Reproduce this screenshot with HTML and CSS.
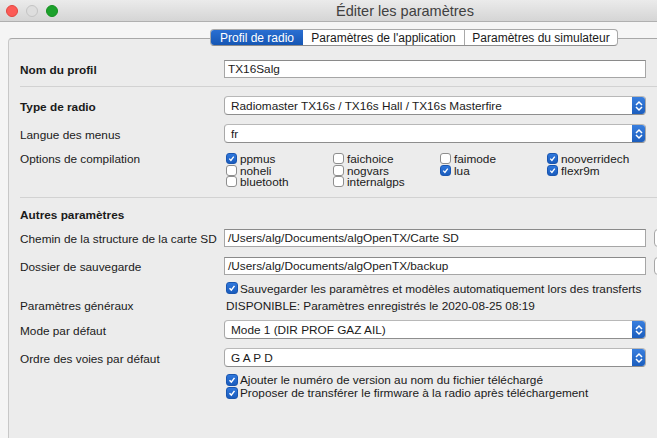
FILE: index.html
```html
<!DOCTYPE html>
<html lang="fr">
<head>
<meta charset="utf-8">
<title>Éditer les paramètres</title>
<link rel="stylesheet" href="styles.css">
</head>
<body>
<div class="window">
  <div class="titlebar">
    <div class="lights">
      <span class="light red"></span>
      <span class="light grey"></span>
      <span class="light green"></span>
    </div>
    <div class="title">Éditer les paramètres</div>
  </div>
  <div class="body">
    <div class="tabs">
      <div class="tab active">Profil de radio</div>
      <div class="tab">Paramètres de l'application</div>
      <div class="tab last">Paramètres du simulateur</div>
    </div>
    <div class="panel">
      <div class="form">
        <div class="row r-name">
          <div class="label bold">Nom du profil</div>
          <div class="input">TX16Salg</div>
        </div>
        <div class="sep s1"></div>
        <div class="row r-type">
          <div class="label bold">Type de radio</div>
          <div class="select"><span class="sel-text">Radiomaster TX16s / TX16s Hall / TX16s Masterfire</span><span class="arrows"><svg width="8" height="12" viewBox="0 0 8 12"><path d="M1 5 L4 2 L7 5 M1 7 L4 10 L7 7" fill="none" stroke="#fff" stroke-width="1.5"/></svg></span></div>
        </div>
        <div class="row r-lang">
          <div class="label">Langue des menus</div>
          <div class="select"><span class="sel-text">fr</span><span class="arrows"><svg width="8" height="12" viewBox="0 0 8 12"><path d="M1 5 L4 2 L7 5 M1 7 L4 10 L7 7" fill="none" stroke="#fff" stroke-width="1.5"/></svg></span></div>
        </div>
        <div class="row r-opts">
          <div class="label">Options de compilation</div>
          <div class="optgrid">
            <div class="opt"><span class="cb on"><svg viewBox="0 0 12 12"><path d="M3 6.2 L5.2 8.5 L9 3.5" fill="none" stroke="#fff" stroke-width="1.8"/></svg></span><span class="t">ppmus</span></div>
            <div class="opt"><span class="cb"></span><span class="t">faichoice</span></div>
            <div class="opt"><span class="cb"></span><span class="t">faimode</span></div>
            <div class="opt"><span class="cb on"><svg viewBox="0 0 12 12"><path d="M3 6.2 L5.2 8.5 L9 3.5" fill="none" stroke="#fff" stroke-width="1.8"/></svg></span><span class="t">nooverridech</span></div>
            <div class="opt"><span class="cb"></span><span class="t">noheli</span></div>
            <div class="opt"><span class="cb"></span><span class="t">nogvars</span></div>
            <div class="opt"><span class="cb on"><svg viewBox="0 0 12 12"><path d="M3 6.2 L5.2 8.5 L9 3.5" fill="none" stroke="#fff" stroke-width="1.8"/></svg></span><span class="t">lua</span></div>
            <div class="opt"><span class="cb on"><svg viewBox="0 0 12 12"><path d="M3 6.2 L5.2 8.5 L9 3.5" fill="none" stroke="#fff" stroke-width="1.8"/></svg></span><span class="t">flexr9m</span></div>
            <div class="opt"><span class="cb"></span><span class="t">bluetooth</span></div>
            <div class="opt"><span class="cb"></span><span class="t">internalgps</span></div>
          </div>
        </div>
        <div class="sep s2"></div>
        <div class="section bold">Autres paramètres</div>
        <div class="row r-sd">
          <div class="label">Chemin de la structure de la carte SD</div>
          <div class="input">/Users/alg/Documents/algOpenTX/Carte SD</div>
          <div class="browse"></div>
        </div>
        <div class="row r-backup">
          <div class="label">Dossier de sauvegarde</div>
          <div class="input">/Users/alg/Documents/algOpenTX/backup</div>
          <div class="browse"></div>
        </div>
        <div class="row r-check1">
          <div class="label"></div>
          <div class="check"><span class="cb big on"><svg viewBox="0 0 12 12"><path d="M3 6.2 L5.2 8.5 L9 3.5" fill="none" stroke="#fff" stroke-width="1.8"/></svg></span><span class="t">Sauvegarder les paramètres et modèles automatiquement lors des transferts</span></div>
        </div>
        <div class="row r-gen">
          <div class="label">Paramètres généraux</div>
          <div class="value">DISPONIBLE: Paramètres enregistrés le 2020-08-25 08:19</div>
        </div>
        <div class="row r-mode">
          <div class="label">Mode par défaut</div>
          <div class="select"><span class="sel-text">Mode 1 (DIR PROF GAZ AIL)</span><span class="arrows"><svg width="8" height="12" viewBox="0 0 8 12"><path d="M1 5 L4 2 L7 5 M1 7 L4 10 L7 7" fill="none" stroke="#fff" stroke-width="1.5"/></svg></span></div>
        </div>
        <div class="row r-order">
          <div class="label">Ordre des voies par défaut</div>
          <div class="select"><span class="sel-text">G A P D</span><span class="arrows"><svg width="8" height="12" viewBox="0 0 8 12"><path d="M1 5 L4 2 L7 5 M1 7 L4 10 L7 7" fill="none" stroke="#fff" stroke-width="1.5"/></svg></span></div>
        </div>
        <div class="row r-check2">
          <div class="label"></div>
          <div class="check"><span class="cb big on"><svg viewBox="0 0 12 12"><path d="M3 6.2 L5.2 8.5 L9 3.5" fill="none" stroke="#fff" stroke-width="1.8"/></svg></span><span class="t">Ajouter le numéro de version au nom du fichier téléchargé</span></div>
        </div>
        <div class="row r-check3">
          <div class="label"></div>
          <div class="check"><span class="cb big on"><svg viewBox="0 0 12 12"><path d="M3 6.2 L5.2 8.5 L9 3.5" fill="none" stroke="#fff" stroke-width="1.8"/></svg></span><span class="t">Proposer de transférer le firmware à la radio après téléchargement</span></div>
        </div>
      </div>
    </div>
  </div>
</div>
</body>
</html>
```

FILE: styles.css
```css
html, body {
  margin: 0;
  padding: 0;
  width: 657px;
  height: 438px;
  overflow: hidden;
  background: #f5f5f5;
}
body {
  font-family: "Liberation Sans", Arial, sans-serif;
  font-size: 11.8px;
  color: #1a1a1a;
}
.window {
  width: 830px;
  height: 438px;
  display: flex;
  flex-direction: column;
}
.titlebar {
  height: 21px;
  flex: none;
  background: linear-gradient(#ebebeb, #d5d5d5);
  border-bottom: 1px solid #b0b0b0;
  display: flex;
  align-items: center;
}
.lights {
  display: flex;
  gap: 8px;
  padding-left: 6px;
}
.light {
  width: 12px;
  height: 12px;
  border-radius: 50%;
  box-sizing: border-box;
}
.light.red { background: #fc5b57; border: 1px solid #e2463f; }
.light.grey { background: #dedede; border: 1px solid #c4c4c4; }
.light.green { background: #1ca12c; border: 1px solid #14901f; }
.title {
  flex: 1;
  text-align: center;
  font-size: 14.5px;
  color: #404040;
  margin-left: -78px;
  padding-top: 1px;
}
.body {
  flex: 1;
  background: #f5f5f5;
  padding: 7px 0 0 8px;
}
.tabs {
  display: flex;
  margin-left: 202px;
  height: 17px;
  position: relative;
  z-index: 1;
  margin-bottom: -8px;
  width: max-content;
  background: #fff;
  border: 1px solid #a9a9a9;
  border-bottom-color: #8e8e8e;
  border-radius: 4px;
  box-sizing: border-box;
  overflow: hidden;
}
.tab {
  line-height: 15px;
  font-size: 12px;
  color: #1a1a1a;
  border-right: 1px solid #a9a9a9;
  padding: 1px 0 0 0;
  box-sizing: border-box;
  text-align: center;
}
.tab.last { border-right: none; }
.tab.active {
  background: linear-gradient(#2a6fd2, #1556b4);
  color: #fff;
  border-right: none;
  width: 92px;
}
.tabs .tab:nth-child(2) { width: 162px; }
.tabs .tab:nth-child(3) { width: 152px; }
.panel {
  height: 420px;
  background: #ececec;
  border: 1px solid #a8a8a8;
  border-right: none;
  border-bottom: none;
  border-top-left-radius: 4px;
  border-left-color: #c8c8c8;
}
.form {
  display: flex;
  flex-direction: column;
  padding: 21px 0 0 11px;
}
.row {
  display: flex;
  align-items: center;
}
.label {
  width: 204px;
  flex: none;
  line-height: 14px;
  padding-top: 2px;
  box-sizing: border-box;
}
.bold { font-weight: bold; }
.input {
  width: 422px;
  height: 18px;
  box-sizing: border-box;
  background: #fff;
  border: 1px solid #a6a6a6;
  border-top-color: #8a8a8a;
  padding: 1px 3px 0 3px;
  line-height: 15px;
  flex: none;
}
.browse {
  width: 30px;
  height: 18px;
  margin-left: 8px;
  background: #fff;
  border: 1px solid #a6a6a6;
  border-radius: 4px;
  box-sizing: border-box;
  flex: none;
}
.select {
  width: 422px;
  height: 19px;
  box-sizing: border-box;
  background: #fff;
  border: 1px solid #a8a8a8;
  border-top-color: #b8b8b8;
  border-bottom-color: #8e8e8e;
  border-radius: 4px;
  display: flex;
  align-items: center;
  flex: none;
  overflow: hidden;
}
.sel-text {
  flex: 1;
  padding: 1px 0 0 6px;
  line-height: 16px;
}
.arrows {
  width: 14px;
  align-self: stretch;
  margin: -1px -1px -1px 0;
  background: linear-gradient(#3a80e0, #1a5cbc);
  display: flex;
  align-items: center;
  justify-content: center;
  border-radius: 0 4px 4px 0;
}
.sep {
  height: 1px;
  background: #d2d2d2;
}
.r-name { height: 18px; }
.s1 { margin-top: 8px; }
.r-type { margin-top: 9px; height: 19px; }
.r-lang { margin-top: 9px; height: 19px; }
.r-opts { margin-top: 8px; align-items: flex-start; height: 36px; }
.r-opts .label { padding-top: 1px; }
.optgrid {
  display: grid;
  grid-template-columns: repeat(4, 107px);
  grid-auto-rows: 11.5px;
  padding-top: 2px;
  padding-left: 2px;
}
.opt {
  display: flex;
  align-items: center;
  white-space: nowrap;
}
.opt .t {
  line-height: 9px;
  padding-top: 2px;
}
.cb {
  width: 11px;
  height: 11px;
  box-sizing: border-box;
  border: 1px solid #8e8e8e;
  border-radius: 3px;
  background: #fff;
  margin-right: 3px;
  flex: none;
  display: flex;
}
.cb.on {
  background: linear-gradient(#2f77dc, #1a5cbd);
  border-color: #1a56b0;
}
.cb svg { width: 100%; height: 100%; }
.cb.big { width: 12px; height: 12px; margin-right: 2px; }
.s2 { margin-top: 10px; }
.section { margin-top: 9px; line-height: 14px; padding-top: 1px; }
.r-sd { margin-top: 7px; height: 18px; }
.r-backup { margin-top: 10px; height: 18px; }
.r-check1 { margin-top: 6px; height: 14px; }
.check {
  display: flex;
  align-items: center;
  white-space: nowrap;
  padding-left: 2px;
}
.check .t { line-height: 11px; padding-top: 2px; }
.r-gen { margin-top: 3px; height: 14px; }
.value { padding: 2px 0 0 2px; white-space: nowrap; line-height: 14px; }
.r-mode { margin-top: 8px; height: 19px; }
.r-order { margin-top: 9px; height: 19px; }
.r-check2 { margin-top: 6px; height: 13px; }
.r-check3 { height: 13px; }
```
